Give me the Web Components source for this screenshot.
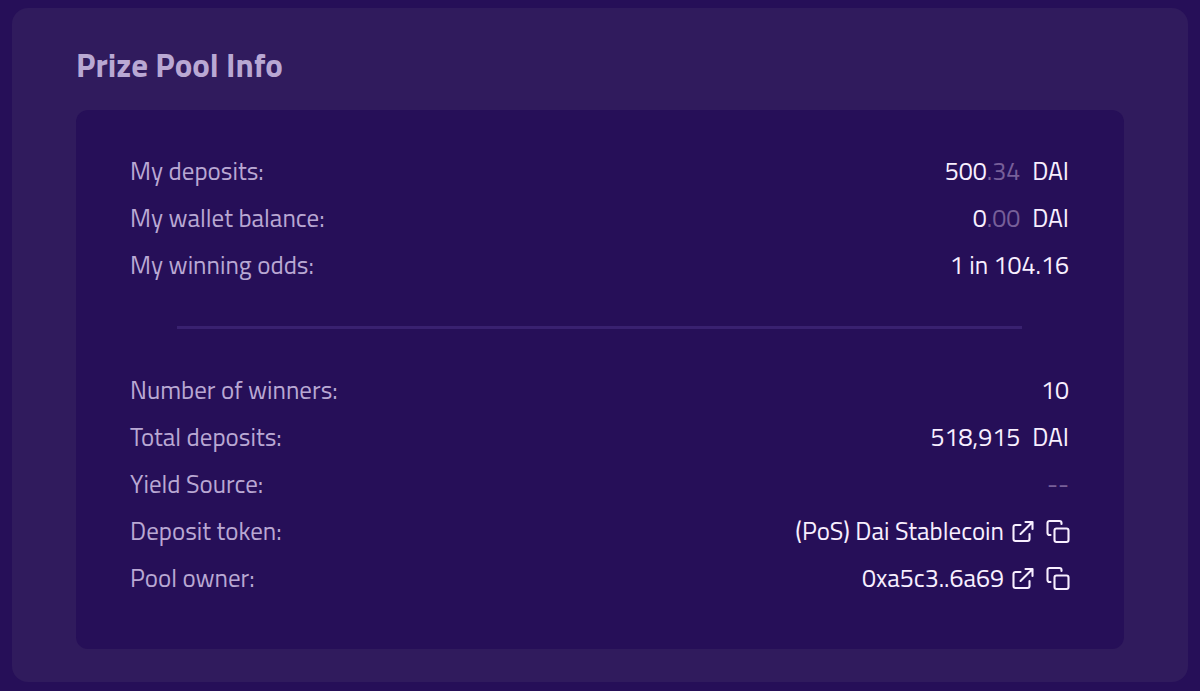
<!DOCTYPE html>
<html lang="en">
<head>
<meta charset="utf-8">
<meta name="viewport" content="width=device-width, initial-scale=1">
<title>Prize Pool Info</title>
<style>
:root {
  --page: #260f58;
  --card: #301b5d;
  --muted: #b9a8d3;
  --text: #f8efff;
  --faint: #775f99;
  --line: #392170;
}
body {
  margin: 0;
  background: var(--page);
  color: var(--text);
  font: 400 25px/47px "Titillium Web", Roboto, "Liberation Sans", sans-serif;
}
</style>
</head>
<body>
<pool-card heading="Prize Pool Info">
  <info-group>
    <info-row label="My deposits:"><token-amount whole="500" fraction=".34" unit="DAI"></token-amount></info-row>
    <info-row label="My wallet balance:"><token-amount whole="0" fraction=".00" unit="DAI"></token-amount></info-row>
    <info-row label="My winning odds:">1 in 104.16</info-row>
  </info-group>
  <section-rule></section-rule>
  <info-group>
    <info-row label="Number of winners:">10</info-row>
    <info-row label="Total deposits:"><token-amount whole="518,915" unit="DAI"></token-amount></info-row>
    <info-row label="Yield Source:" empty>--</info-row>
    <info-row label="Deposit token:"><address-link>(PoS) Dai Stablecoin</address-link></info-row>
    <info-row label="Pool owner:"><address-link>0xa5c3..6a69</address-link></info-row>
  </info-group>
</pool-card>

<script>
class ShadowElement extends HTMLElement {
  render(html) {
    this.attachShadow({ mode: "open" }).innerHTML = html;
  }
  attr(name) {
    return this.getAttribute(name) || "";
  }
}

customElements.define("pool-card", class extends ShadowElement {
  connectedCallback() {
    this.render(`
      <style>
        :host { display: block; padding: 8px 12px; }
        section { background: var(--card); border-radius: 16px; padding: 33px 64px; }
        h2 { margin: 0 0 21px; font-size: 33px; line-height: 48px; font-weight: 700; color: var(--muted); }
        .panel { background: var(--page); border-radius: 12px; padding: 38px 55px 47px 54px; }
      </style>
      <section aria-labelledby="title">
        <h2 id="title">${this.attr("heading")}</h2>
        <div class="panel"><slot></slot></div>
      </section>`);
  }
});

customElements.define("info-group", class extends ShadowElement {
  connectedCallback() {
    this.render(`<style>:host { display: flex; flex-direction: column; }</style><slot></slot>`);
  }
});

customElements.define("info-row", class extends ShadowElement {
  connectedCallback() {
    this.render(`
      <style>
        :host { display: flex; justify-content: space-between; gap: 24px; }
        .label { color: var(--muted); }
        .value { text-align: right; }
        :host([empty]) .value { color: var(--faint); }
      </style>
      <div class="label" id="label">${this.attr("label")}</div>
      <div class="value" role="group" aria-labelledby="label"><slot></slot></div>`);
  }
});

customElements.define("section-rule", class extends ShadowElement {
  connectedCallback() {
    this.render(`
      <style>
        :host { display: block; padding: 37px 47px 38px; }
        hr { margin: 0; border: 0; height: 3px; background: var(--line); }
      </style>
      <hr>`);
  }
});

customElements.define("token-amount", class extends ShadowElement {
  connectedCallback() {
    this.render(`
      <style>
        :host { display: inline-flex; gap: 12px; }
        .fraction { color: var(--faint); }
      </style>
      <span>${this.attr("whole")}<span class="fraction">${this.attr("fraction")}</span></span>
      <span>${this.attr("unit")}</span>`);
  }
});

customElements.define("address-link", class extends ShadowElement {
  connectedCallback() {
    this.render(`
      <style>
        :host { display: flex; align-items: center; gap: 10px; }
        a { display: flex; align-items: center; gap: 7px; color: inherit; text-decoration: none; }
        button { display: flex; padding: 0; border: 0; background: none; color: inherit; cursor: pointer; }
        svg { display: block; overflow: visible; width: 24px; height: 24px; fill: none; stroke: currentColor; stroke-width: 2.1; stroke-linecap: round; stroke-linejoin: round; }
      </style>
      <a href="#"><slot></slot><svg viewBox="0 0 24 24" aria-hidden="true">
        <path d="M9.5 5H4.5a2 2 0 0 0-2 2v12a2 2 0 0 0 2 2h12a2 2 0 0 0 2-2v-5"/>
        <path d="M14.5 2H21.5V9M21 2.5L9.5 14"/>
      </svg></a>
      <button type="button" aria-label="Copy address"><svg viewBox="0 0 24 24" aria-hidden="true">
        <rect x="9.5" y="8.5" width="14" height="13.5" rx="2"/>
        <path d="M5.5 15h-1a2 2 0 0 1-2-2v-10a2 2 0 0 1 2-2h10a2 2 0 0 1 2 2v1"/>
      </svg></button>`);
  }
});
</script>
</body>
</html>
